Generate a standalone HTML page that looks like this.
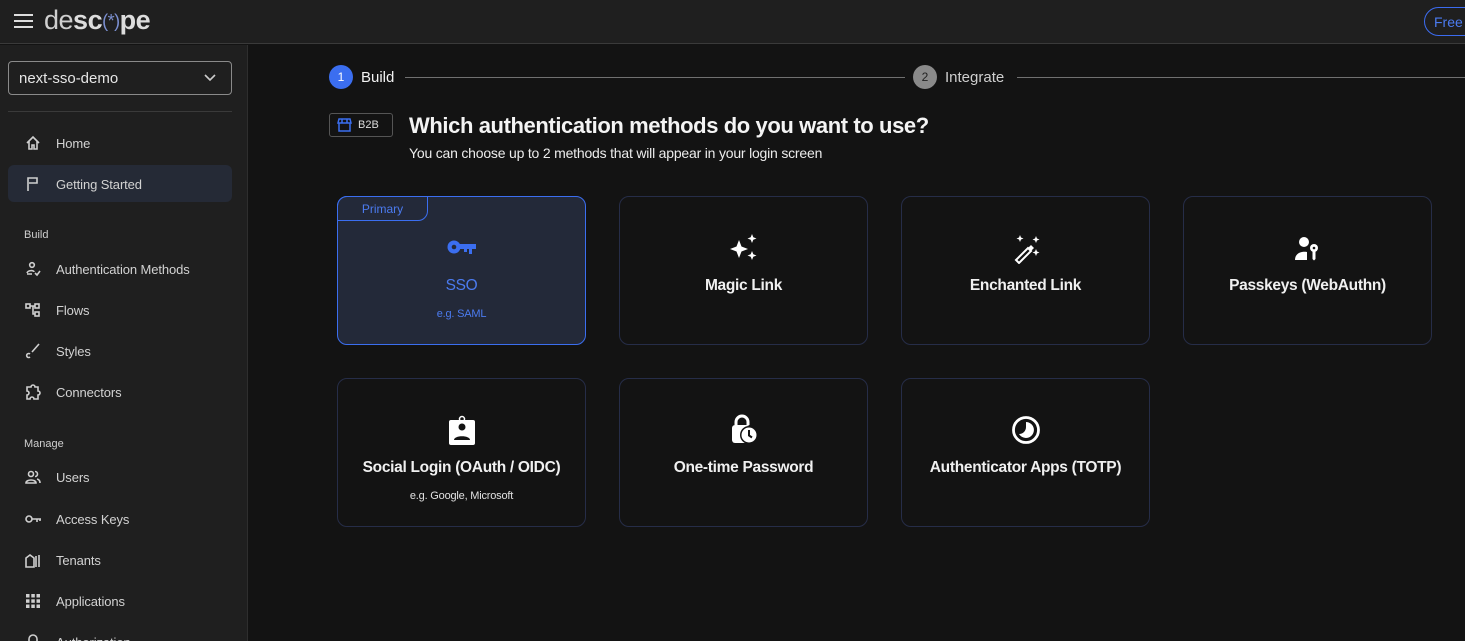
<!DOCTYPE html>
<html><head><meta charset="utf-8"><style>
*{box-sizing:border-box;margin:0;padding:0}
html{width:1465px;height:641px;overflow:hidden}
body{width:1465px;height:641px;overflow:hidden;background:#131313;font-family:"Liberation Sans",sans-serif;color:#e8e8e8;position:relative}
.abs{position:absolute}
.hdr{left:0;top:0;width:1465px;height:44px;background:#1f1f1f;border-bottom:1px solid #3a3a3a}
.side{left:0;top:45px;width:248px;height:596px;background:#1f1f1f;border-right:1px solid #2e2e2e;overflow:hidden}
.nav{position:absolute;left:24px;font-size:13px;color:#d2d2d2;display:flex;align-items:center;letter-spacing:-.1px}
.nav svg{width:18px;height:18px;margin-right:14px;fill:none;stroke:#cfcfcf;stroke-width:1.6}
.sec{position:absolute;left:24px;font-size:11px;color:#cfcfcf}
.card{position:absolute;width:249px;height:149px;border:1px solid #262d48;border-radius:10px;background:#131313;text-align:center}
.card .ic{position:absolute;left:0;right:0;top:37px;height:26px;display:flex;justify-content:center}
.card .t{position:absolute;left:0;right:0;top:80px;font-size:15.5px;font-weight:bold;color:#f0f0f0;letter-spacing:-.3px}
.card .s{position:absolute;left:0;right:0;top:111px;font-size:11px;color:#e0e0e0;letter-spacing:-.2px}
</style></head><body>
<div class="abs hdr">
 <div class="abs" style="left:14px;top:14px;width:19px;height:2px;background:#ddd;box-shadow:0 6px 0 #ddd,0 12px 0 #ddd"></div>
 <div class="abs" style="left:44px;top:5px;font-size:27px;letter-spacing:-.5px;color:#ddd"><span style="font-weight:300;color:#cfcfcf">de</span><b>sc</b><span style="color:#7b8fd0;font-size:18px;vertical-align:2px">(*)</span><b>pe</b></div>
 <div class="abs" style="left:1424px;top:7px;width:60px;height:29px;border:1.5px solid #3c6cf0;border-radius:15px;color:#4b7bf0;font-size:14px;padding:6px 0 0 9px">Free</div>
</div>
<div class="abs side">
 <div class="abs" style="left:8px;top:16px;width:224px;height:34px;border:1px solid #8a8a8a;border-radius:4px;font-size:15px;padding:8px 0 0 10px;color:#e6e6e6">next-sso-demo
  <svg class="abs" style="left:194px;top:11px" width="14" height="10" viewBox="0 0 14 10"><path d="M2 2l5 5 5-5" stroke="#ccc" stroke-width="1.6" fill="none"/></svg></div>
 <div class="abs" style="left:8px;top:66px;width:224px;height:1px;background:#3a3a3a"></div>
 <div class="nav" style="top:89px"><svg viewBox="0 0 18 18"><path d="M3 9L9 3l6 6M5 7.5V15h3v-4h2v4h3V7.5"/></svg>Home</div>
 <div class="abs" style="left:8px;top:120px;width:224px;height:37px;background:#252a36;border-radius:6px"></div>
 <div class="nav" style="top:130px"><svg viewBox="0 0 18 18"><path d="M4 16V3h9v5H5"/></svg>Getting Started</div>
 <div class="sec" style="top:184px">Build</div>
 <div class="nav" style="top:215px"><svg viewBox="0 0 18 18"><circle cx="8" cy="5" r="2.3"/><path d="M3 13c1-3 7-3 7-1M3 14h5M11 13l2 2 3-4"/></svg>Authentication Methods</div>
 <div class="nav" style="top:256px"><svg viewBox="0 0 18 18"><rect x="2" y="3" width="4" height="4"/><rect x="11" y="3" width="4" height="4"/><rect x="11" y="11" width="4" height="4"/><path d="M6 5h5M9 5v8h2"/></svg>Flows</div>
 <div class="nav" style="top:297px"><svg viewBox="0 0 18 18"><path d="M15 2L8 10M6 12a2 2 0 1 0 0 3"/></svg>Styles</div>
 <div class="nav" style="top:338px"><svg viewBox="0 0 18 18"><path d="M3 4h4a2 2 0 0 1 4 0h3v4a2 2 0 0 1 0 4v4h-4a2 2 0 0 0-4 0H3v-4a2 2 0 0 0 0-4z"/></svg>Connectors</div>
 <div class="sec" style="top:393px">Manage</div>
 <div class="nav" style="top:423px"><svg viewBox="0 0 18 18"><circle cx="7" cy="6" r="2.5"/><path d="M2 15c0-4 10-4 10 0zM11 3.5a2.5 2.5 0 0 1 0 5M13 11c2 .5 3 2 3 4"/></svg>Users</div>
 <div class="nav" style="top:465px"><svg viewBox="0 0 18 18"><circle cx="5" cy="9" r="3"/><path d="M8 9h9M13 9v3M16 9v2"/></svg>Access Keys</div>
 <div class="nav" style="top:506px"><svg viewBox="0 0 18 18"><path d="M2 16V7l4-3 4 3v9zM12 5v11M15 4v12"/></svg>Tenants</div>
 <div class="nav" style="top:547px"><svg viewBox="0 0 18 18" style="fill:#cfcfcf;stroke:none"><rect x="2" y="2" width="3.5" height="3.5"/><rect x="7.3" y="2" width="3.5" height="3.5"/><rect x="12.5" y="2" width="3.5" height="3.5"/><rect x="2" y="7.3" width="3.5" height="3.5"/><rect x="7.3" y="7.3" width="3.5" height="3.5"/><rect x="12.5" y="7.3" width="3.5" height="3.5"/><rect x="2" y="12.5" width="3.5" height="3.5"/><rect x="7.3" y="12.5" width="3.5" height="3.5"/><rect x="12.5" y="12.5" width="3.5" height="3.5"/></svg>Applications</div>
 <div class="nav" style="top:588px"><svg viewBox="0 0 18 18"><path d="M5 9V6a4 4 0 0 1 8 0v3M3 9h12v8H3z"/></svg>Authorization</div>
</div>

<div class="abs" style="left:329px;top:65px;width:24px;height:24px;border-radius:50%;background:#3b6ef0;color:#fff;font-size:12px;text-align:center;line-height:24px">1</div>
<div class="abs" style="left:361px;top:69px;font-size:15px;color:#f2f2f2">Build</div>
<div class="abs" style="left:405px;top:77px;width:500px;height:1px;background:#707070"></div>
<div class="abs" style="left:913px;top:65px;width:24px;height:24px;border-radius:50%;background:#8a8a8a;color:#222;font-size:12px;text-align:center;line-height:24px">2</div>
<div class="abs" style="left:945px;top:69px;font-size:15px;color:#cfcfcf">Integrate</div>
<div class="abs" style="left:1017px;top:77px;width:448px;height:1px;background:#707070"></div>

<div class="abs" style="left:329px;top:113px;width:64px;height:24px;border:1px solid #555;border-radius:3px;font-size:11px;color:#ddd;padding:5px 0 0 28px">B2B
 <svg class="abs" style="left:7px;top:4px" width="15" height="14" viewBox="0 0 15 14"><path d="M2 1h11l1 4H1zM2 5v8h11V5M5 1v4M10 1v4" stroke="#3b6ef0" stroke-width="1.5" fill="none"/></svg></div>
<div class="abs" style="left:409px;top:113px;font-size:22px;font-weight:bold;color:#f4f4f4;letter-spacing:-.4px">Which authentication methods do you want to use?</div>
<div class="abs" style="left:409px;top:145px;font-size:14px;color:#ececec;letter-spacing:-.2px">You can choose up to 2 methods that will appear in your login screen</div>

<div class="card" style="left:337px;top:196px;background:#232939;border-color:#3b6ef0">
 <div class="abs" style="left:-1px;top:-1px;width:91px;height:25px;border:1px solid #3b6ef0;border-radius:10px 0 10px 0;font-size:12px;color:#4b7bf0;padding-top:5px">Primary</div>
 <div class="ic"><svg width="32" height="26" viewBox="0 0 32 26"><circle cx="8" cy="13" r="6.5" fill="#3b6ef0"/><circle cx="8" cy="13" r="2.3" fill="#232939"/><path d="M13 10h17v5h-4v5h-3v-5h-2v3h-3v-3h-5z" fill="#3b6ef0"/></svg></div>
 <div class="t" style="color:#4b7bf0;font-weight:normal">SSO</div>
 <div class="s" style="color:#4b7bf0">e.g. SAML</div>
</div>
<div class="card" style="left:619px;top:196px">
 <div class="ic"><svg width="32" height="32" viewBox="0 0 32 32" style="margin-top:-2px"><path d="M11 8l2.5 6.5L20 17l-6.5 2.5L11 26l-2.5-6.5L2 17l6.5-2.5z M24 2l1.3 3.2L28.5 6.5l-3.2 1.3L24 11l-1.3-3.2L19.5 6.5l3.2-1.3z M24 19l1.3 3.2 3.2 1.3-3.2 1.3L24 28l-1.3-3.2-3.2-1.3 3.2-1.3z" fill="#fff"/></svg></div>
 <div class="t">Magic Link</div>
</div>
<div class="card" style="left:901px;top:196px">
 <div class="ic"><svg width="32" height="32" viewBox="0 0 32 32" style="margin-top:-2px"><path d="M6 28l12-12 3 3L9 31z" stroke="#fff" stroke-width="2" fill="none"/><path d="M18 16l3-3 3 3-3 3z" fill="#fff"/><path d="M10 3l1 2.5 2.5 1-2.5 1L10 10l-1-2.5-2.5-1 2.5-1zM26 4l1 2.5 2.5 1-2.5 1L26 11l-1-2.5-2.5-1 2.5-1zM26 17l1 2.5 2.5 1-2.5 1L26 24l-1-2.5-2.5-1 2.5-1z" fill="#fff"/></svg></div>
 <div class="t">Enchanted Link</div>
</div>
<div class="card" style="left:1183px;top:196px">
 <div class="ic"><svg width="28" height="28" viewBox="0 0 28 28"><circle cx="10" cy="8" r="5" fill="#fff"/><path d="M1 26c0-6 5-9 12-8v8z" fill="#fff"/><circle cx="20" cy="14" r="4" fill="#fff"/><circle cx="20" cy="14" r="1.3" fill="#131313"/><path d="M18.5 17h3v8l-1.5 1.5-1.5-1.5z" fill="#fff"/></svg></div>
 <div class="t">Passkeys (WebAuthn)</div>
</div>
<div class="card" style="left:337px;top:378px">
 <div class="ic"><svg width="28" height="30" viewBox="0 0 28 30" style="margin-top:-1px"><rect x="1" y="5" width="26" height="25" rx="2" fill="#fff"/><circle cx="14" cy="4" r="2.5" fill="none" stroke="#fff" stroke-width="1.5"/><circle cx="14" cy="12" r="3.5" fill="#131313"/><path d="M6 25c0-5 16-5 16 0z" fill="#131313"/></svg></div>
 <div class="t">Social Login (OAuth / OIDC)</div>
 <div class="s">e.g. Google, Microsoft</div>
</div>
<div class="card" style="left:619px;top:378px">
 <div class="ic"><svg width="32" height="32" viewBox="0 0 32 32" style="margin-top:-2px"><path d="M8 11V8a6 6 0 0 1 12 0v3" stroke="#fff" stroke-width="3" fill="none"/><rect x="4" y="11" width="18" height="18" rx="3" fill="#fff"/><circle cx="21" cy="21" r="9" fill="#131313"/><circle cx="21" cy="21" r="7.5" fill="#fff"/><path d="M21 16v5.5l3 2" stroke="#131313" stroke-width="2" fill="none"/></svg></div>
 <div class="t">One-time Password</div>
</div>
<div class="card" style="left:901px;top:378px">
 <div class="ic"><svg width="30" height="30" viewBox="0 0 30 30" style="margin-top:-1px"><circle cx="15" cy="15" r="12.5" stroke="#fff" stroke-width="2.8" fill="none"/><path d="M15 7a8 8 0 1 1-7 12c4 0 7-3 7-7z" fill="#fff"/></svg></div>
 <div class="t">Authenticator Apps (TOTP)</div>
</div>
</body></html>
